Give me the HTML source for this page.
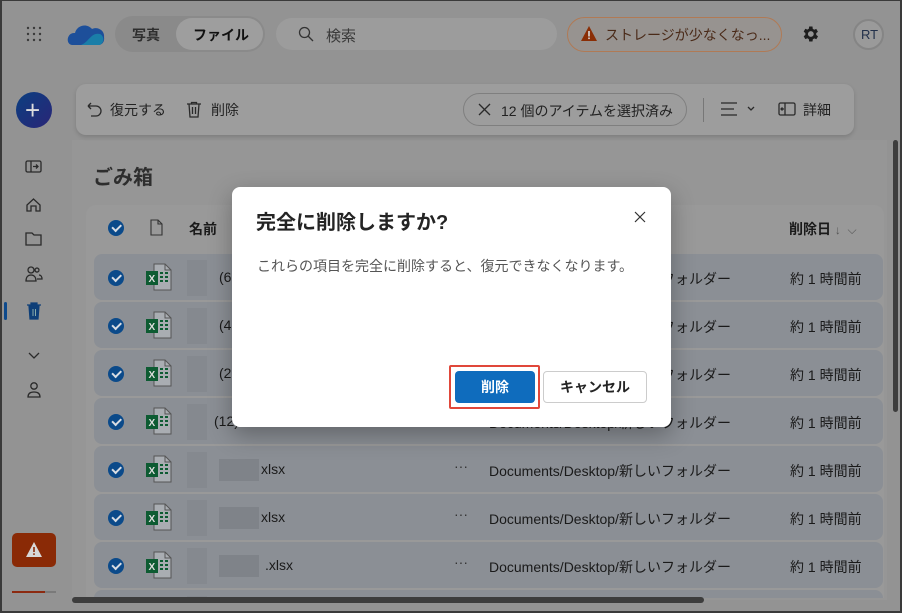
<!DOCTYPE html>
<html style="width:902px;height:613px;overflow:hidden"><head><meta charset="utf-8"><style>
*{box-sizing:border-box;margin:0;padding:0}
body{width:902px;height:613px;overflow:hidden;background:#939393;font-family:"Liberation Sans","Noto Sans CJK JP",sans-serif;color:#151515;position:relative}
.abs{position:absolute}
.frame{position:absolute;left:0;top:0;width:902px;height:613px;border:2px solid #3a3a3a;border-top-width:1px;pointer-events:none;z-index:50}
.t{position:absolute;white-space:nowrap}
.row{position:absolute;left:94px;width:789px;height:46px;background:#8b8f95;border-radius:8px}
.chk{position:absolute;left:108px;width:16px;height:16px;border-radius:50%;background:#0b4a8a}
.chk:after{content:"";position:absolute;left:4px;top:4px;width:7px;height:3.5px;border-left:2px solid #d8dde3;border-bottom:2px solid #d8dde3;transform:rotate(-45deg)}
.xl{position:absolute;left:146px;width:28px;height:28px}
.blur{position:absolute;background:#7f8389}
#clip{position:absolute;left:0;top:0;width:902px;height:598px;overflow:hidden}
</style></head><body>
<div class="frame"></div>
<svg class="abs" style="left:26px;top:26px" width="16" height="16"><g fill="#3a3a3a"><circle cx="2" cy="2" r="1.2"/><circle cx="8" cy="2" r="1.2"/><circle cx="14" cy="2" r="1.2"/><circle cx="2" cy="8" r="1.2"/><circle cx="8" cy="8" r="1.2"/><circle cx="14" cy="8" r="1.2"/><circle cx="2" cy="14" r="1.2"/><circle cx="8" cy="14" r="1.2"/><circle cx="14" cy="14" r="1.2"/></g></svg>
<svg class="abs" style="left:67px;top:22px" width="38" height="25"><path d="M5 23 C-2 22 0 10 8 11 C10 3 20 1 25 7 C31 4 38 9 37 15 C38 21 34 23 31 23 Z" fill="#1d4f9a"/><path d="M14 23 C22 20 24 10 33 12 C37 14 38 20 33 23 Z" fill="#1a7ea8"/></svg>
<div class="abs" style="left:115px;top:16px;width:150px;height:36px;border-radius:18px;background:#8a8a8a"></div>
<div class="t" style="left:132px;top:25px;font-size:14px;font-weight:bold;color:#2e2e2e">写真</div>
<div class="abs" style="left:176px;top:18px;width:87px;height:32px;border-radius:16px;background:#9e9e9e"></div>
<div class="t" style="left:193px;top:25px;font-size:14px;font-weight:bold;color:#111">ファイル</div>
<div class="abs" style="left:276px;top:18px;width:281px;height:32px;border-radius:16px;background:#9c9c9c"></div>
<svg class="abs" style="left:298px;top:26px" width="16" height="16"><circle cx="6.5" cy="6.5" r="5" fill="none" stroke="#333" stroke-width="1.3"/><path d="M10 10l5 5" stroke="#333" stroke-width="1.3"/></svg>
<div class="t" style="left:326px;top:25px;font-size:15px;color:#3a3a3a">検索</div>
<div class="abs" style="left:567px;top:17px;width:215px;height:35px;border-radius:18px;border:1px solid #b07a55;background:#979390"></div>
<svg class="abs" style="left:580px;top:25px" width="18" height="17"><path d="M9 1L17 16H1Z" fill="#8a2e06"/><rect x="8.2" y="6" width="1.6" height="5.5" fill="#ddd"/><rect x="8.2" y="12.5" width="1.6" height="1.6" fill="#ddd"/></svg>
<div class="t" style="left:605px;top:25px;font-size:14px;color:#4a2a18">ストレージが少なくなっ...</div>
<svg class="abs" style="left:800px;top:24px" width="20" height="20" viewBox="0 0 24 24"><path fill="#1e1e1e" d="M19.4 13c.04-.3.1-.7.1-1s-.03-.7-.1-1l2.1-1.7-2-3.4-2.5 1a7 7 0 0 0-1.7-1L15 3h-4l-.4 2.7c-.6.3-1.2.6-1.7 1l-2.5-1-2 3.4L6.5 11c0 .3-.1.7-.1 1s0 .7.1 1l-2.1 1.7 2 3.4 2.5-1c.5.4 1.1.7 1.7 1L11 21h4l.4-2.7c.6-.3 1.2-.6 1.7-1l2.5 1 2-3.4zM13 15.5a3.5 3.5 0 1 1 0-7 3.5 3.5 0 0 1 0 7z"/></svg>
<div class="abs" style="left:853px;top:19px;width:31px;height:31px;border-radius:50%;border:2px solid #858585;background:#9a9a9a"></div>
<div class="t" style="left:861px;top:27px;font-size:13px;color:#22304a">RT</div>
<div class="abs" style="left:16px;top:92px;width:36px;height:36px;border-radius:50%;background:linear-gradient(135deg,#0b3f80,#2a2577)"></div>
<div class="t" style="left:25px;top:95px;font-size:26px;color:#ddd;font-weight:300">+</div>
<svg class="abs" style="left:24px;top:158px" width="20" height="240" fill="none" stroke="#2a2a2a" stroke-width="1.3">
<rect x="2" y="3" width="15" height="11" rx="1.5"/><path d="M7 3v11M9 8.5h5M12 6.5l2 2-2 2"/>
<path d="M3 53v-6l6.5-6 6.5 6v6h-4v-5h-5v5z"/>
<path d="M2 75h6l2 2h7v10H2z"/>
<circle cx="7" cy="112" r="3"/><path d="M2 123c0-4 2-6 5-6s5 2 5 6zM15 112a2 2 0 1 0 0 .1M13 121h5c0-2-1-4-3-4"/>
<path d="M5 195l5 5 5-5"/>
<circle cx="10" cy="228" r="3.2"/><path d="M4 239c0-4 3-5 6-5s6 1 6 5z"/>
</svg>
<div class="abs" style="left:4px;top:302px;width:3px;height:18px;background:#0e4a8c;border-radius:2px"></div>
<svg class="abs" style="left:26px;top:302px" width="16" height="18"><path d="M1 3h14M5 3V1h6v2M3 4h10l-1 13H4z" fill="#0e3f78" stroke="#0e3f78" stroke-width="1.2"/><path d="M7 7v7M9.5 7v7" stroke="#8aa" stroke-width="1"/></svg>
<div class="abs" style="left:12px;top:533px;width:44px;height:34px;border-radius:5px;background:#8a2a06"></div>
<svg class="abs" style="left:25px;top:541px" width="18" height="17"><path d="M9 1L17 16H1Z" fill="#d8d8d8"/><rect x="8.2" y="6" width="1.6" height="5" fill="#8a2a06"/><rect x="8.2" y="12.3" width="1.6" height="1.6" fill="#8a2a06"/></svg>
<div class="abs" style="left:12px;top:591px;width:44px;height:2px;background:#7a7a7a"></div>
<div class="abs" style="left:12px;top:591px;width:33px;height:2px;background:#8c2a10"></div>
<div class="abs" style="left:72px;top:140px;width:815px;height:460px;background:#969696"></div>
<div class="abs" style="left:76px;top:84px;width:778px;height:51px;border-radius:10px;background:#9d9d9d;box-shadow:0 2px 4px rgba(0,0,0,.15)"></div>
<svg class="abs" style="left:86px;top:101px" width="16" height="17" fill="none" stroke="#2a2a2a" stroke-width="1.3"><path d="M2 5h8a5 5 0 0 1 0 10H5M2 5l3-3M2 5l3 3"/></svg>
<div class="t" style="left:110px;top:100px;font-size:14px;color:#222">復元する</div>
<svg class="abs" style="left:186px;top:101px" width="16" height="17" fill="none" stroke="#2a2a2a" stroke-width="1.3"><path d="M1 3h14M5.5 3V1.5h5V3M3 3l1 13h8l1-13M6.5 6v7M9.5 6v7"/></svg>
<div class="t" style="left:211px;top:100px;font-size:14px;color:#222">削除</div>
<div class="abs" style="left:463px;top:93px;width:224px;height:33px;border-radius:17px;border:1px solid #7f7f7f"></div>
<svg class="abs" style="left:478px;top:103px" width="13" height="13" stroke="#2a2a2a" stroke-width="1.3"><path d="M1 1l11 11M12 1L1 12"/></svg>
<div class="t" style="left:501px;top:101px;font-size:14px;color:#222">12 個のアイテムを選択済み</div>
<div class="abs" style="left:703px;top:98px;width:1px;height:24px;background:#777"></div>
<svg class="abs" style="left:721px;top:102px" width="36" height="14" fill="none" stroke="#2a2a2a" stroke-width="1.3"><path d="M0 1h16M0 7h13M0 13h16M27 5l3 3 3-3"/></svg>
<svg class="abs" style="left:778px;top:102px" width="18" height="14" fill="none" stroke="#2a2a2a" stroke-width="1.3"><rect x="1" y="1" width="16" height="12" rx="1.5"/><path d="M7 1v12M3 7h3M4.5 5.5 3 7l1.5 1.5"/></svg>
<div class="t" style="left:803px;top:100px;font-size:14px;color:#222">詳細</div>
<div class="t" style="left:93px;top:161px;font-size:20px;font-weight:bold;color:#2e2e2e">ごみ箱</div>
<div id="clip">
<div class="abs" style="left:86px;top:205px;width:798px;height:395px;border-radius:10px 10px 0 0;background:#999"></div>
<div class="chk" style="top:220px"></div>
<svg class="abs" style="left:150px;top:219px" width="13" height="17" fill="none" stroke="#333" stroke-width="1.1"><path d="M1 1h7l4 4v11H1z M8 1v4h4"/></svg>
<div class="t" style="left:189px;top:219px;font-size:14px;font-weight:bold;color:#1a1a1a">名前</div>
<div class="t" style="left:789px;top:219px;font-size:14px;font-weight:bold;color:#1a1a1a">削除日 <span style="font-weight:normal;color:#555;font-size:12px">↓ &nbsp;⌵</span></div>
<div id="rows"></div>
</div>
<script>
var tops=[254,302,350,398,446,494,542,590];
var names=["(6","(4","(2","(12)","xlsx","xlsx",".xlsx",""];
var nx=[219,219,219,214,261,261,265,261];
var h="";
tops.forEach(function(t,i){
 h+='<div class="row" style="top:'+t+'px"></div>';
 h+='<div class="chk" style="top:'+(t+16)+'px"></div>';
 h+='<svg class="xl" style="top:'+(t+9)+'px" viewBox="0 0 28 28"><path d="M8 1h11l6 6v20H8z" fill="#a9adb2" stroke="#555" stroke-width="1"/><path d="M19 1v6h6" fill="none" stroke="#555"/><rect x="0" y="8" width="12" height="14" fill="#0d5b32"/><text x="2.5" y="19" font-size="10" font-family="Liberation Sans" font-weight="bold" fill="#ddd">X</text><path d="M14 10h3M19 10h3M14 14h3M19 14h3M14 18h3M19 18h3" stroke="#0d5b32" stroke-width="2"/></svg>';
 h+='<div class="blur" style="left:187px;top:'+(t+6)+'px;width:20px;height:36px;opacity:.5"></div>';
 if(i>=4){h+='<div class="blur" style="left:219px;top:'+(t+13)+'px;width:40px;height:22px"></div>';}
 h+='<div class="t" style="left:'+nx[i]+'px;top:'+(t+15)+'px;font-size:14px;color:#1a1a1a">'+names[i]+'</div>';
 if(t<560){
 h+='<div class="t" style="left:454px;top:'+(t+12)+'px;font-size:14px;color:#333">···</div>';
 h+='<div class="t" style="left:489px;top:'+(t+15)+'px;font-size:14px;color:#1a1a1a">Documents/Desktop/新しいフォルダー</div>';
 h+='<div class="t" style="left:790px;top:'+(t+15)+'px;font-size:14px;color:#1a1a1a">約 1 時間前</div>';}
});
document.getElementById("rows").innerHTML=h;
</script>
<div class="abs" style="left:893px;top:140px;width:5px;height:272px;border-radius:3px;background:#3d3d3d"></div>
<div class="abs" style="left:72px;top:597px;width:632px;height:6px;border-radius:3px;background:#3d3d3d"></div>
<div class="abs" style="left:232px;top:187px;width:439px;height:240px;background:#fff;border-radius:8px;box-shadow:0 8px 24px rgba(0,0,0,.3);z-index:10">
 <div class="t" style="left:24px;top:19px;font-size:20px;font-weight:bold;color:#242424">完全に削除しますか?</div>
 <svg class="abs" style="left:402px;top:24px" width="12" height="12" stroke="#333" stroke-width="1.2"><path d="M1 1l10 10M11 1L1 11"/></svg>
 <div class="t" style="left:25px;top:69px;font-size:14px;color:#555">これらの項目を完全に削除すると、復元できなくなります。</div>
 <div class="abs" style="left:217px;top:178px;width:91px;height:44px;border:2px solid #e0473a;border-radius:2px"></div>
 <div class="abs" style="left:223px;top:184px;width:80px;height:32px;background:#0f6cbd;border-radius:4px;color:#fff;font-size:14px;font-weight:bold;text-align:center;line-height:32px">削除</div>
 <div class="abs" style="left:311px;top:184px;width:104px;height:32px;border:1px solid #ccc;border-radius:4px;color:#242424;font-size:14px;font-weight:bold;text-align:center;line-height:30px">キャンセル</div>
</div>
</body></html>
